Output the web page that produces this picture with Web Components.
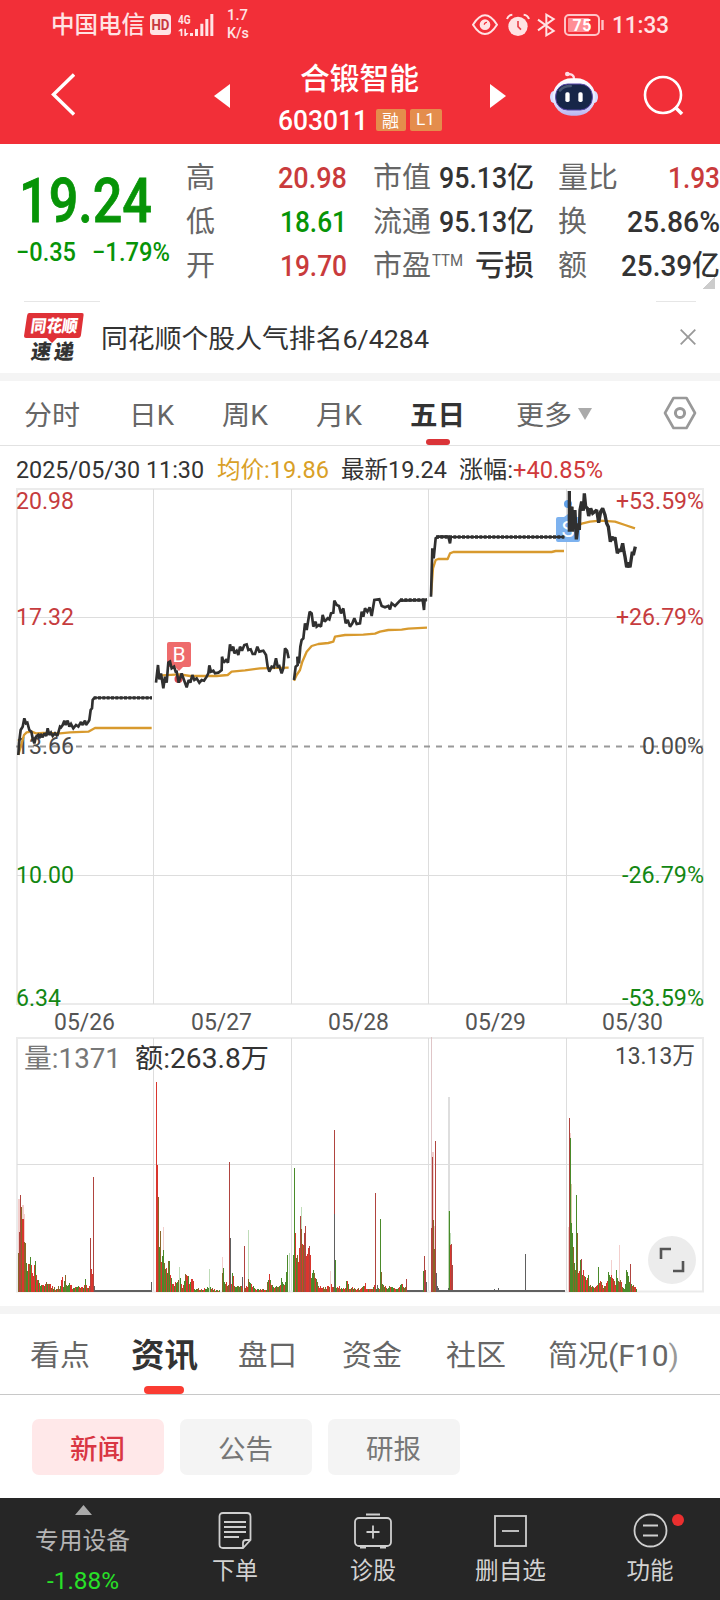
<!DOCTYPE html>
<html lang="zh-CN">
<head>
<meta charset="utf-8">
<title>合锻智能 603011</title>
<style>
html,body{margin:0;padding:0;background:#fff}
body{width:720px;height:1600px;overflow:hidden;font-family:Roboto,"Noto Sans CJK SC",sans-serif;color:#333}
</style>
</head>
<body>
<stock-app></stock-app>
<script>
const define = (name, html, init) => {
  const tpl = document.createElement('template');
  tpl.innerHTML = html;
  customElements.define(name, class extends HTMLElement {
    connectedCallback() {
      if (this.shadowRoot) return;
      this.attachShadow({mode: 'open'}).append(tpl.content.cloneNode(true));
      if (init) init(this, this.shadowRoot);
    }
  });
};

/* One line of text, condensed or widened to the width in "w". */
define('fit-text', `<style>
:host{display:block;flex:none;white-space:nowrap;line-height:1.2}
span{display:inline-block;transform-origin:0 50%}
</style><span><slot></slot></span>`, (el, root) => {
  const w = +el.getAttribute('w'), s = root.querySelector('span');
  const nat = s.getBoundingClientRect().width;
  el.style.width = w + 'px';
  if (nat) s.style.transform = 'scaleX(' + w / nat + ')';
});

define('status-bar', `<style>
:host{display:flex;height:49px;align-items:center;padding-left:51px;color:#ffe3e4;background:#f22f38;box-sizing:border-box}
svg{display:block;flex:none}
.op{font-size:23.5px;font-weight:500;margin-top:1px}
.net{margin-left:13px;font-size:15px;line-height:18px;font-weight:500}
.net fit-text{line-height:18px}
.net fit-text:first-child{margin-top:-2px}
.time{font-size:23px;font-weight:500;margin-top:2px}
</style>
<fit-text class="op" w="94">中国电信</fit-text>
<svg width="21" height="21" viewBox="0 0 21 21" style="margin-left:5px"><rect width="21" height="21" rx="3.5" fill="#ffe3e4"/><text x="10.5" y="15.5" text-anchor="middle" textLength="18" lengthAdjust="spacingAndGlyphs" font-size="14" font-weight="700" fill="#c8373f">HD</text></svg>
<svg width="36" height="24" viewBox="533 36 108 72" style="margin-left:7px" fill="#ffe3e4"><text x="533" y="68" font-size="39" font-weight="700" textLength="38" lengthAdjust="spacingAndGlyphs">4G</text><path d="M541 83h5v22h-5v-14h-8zM552 83h5v13h8l-8 9h-5zM569 96h9v9h-9zM584 84h9v21h-9zM600 68h9v37h-9zM615 54h9v51h-9zM630 39h9v66h-9z"/></svg>
<div class="net"><fit-text w="21">1.7</fit-text><fit-text w="22">K/s</fit-text></div>
<svg width="26" height="22" viewBox="336 40 78 66" style="margin-left:223px" fill="none" stroke="#ffe3e4" stroke-width="6"><path d="M339 72q36-56 72 0q-36 56-72 0z"/><circle cx="375" cy="72" r="13" fill="#ffe3e4"/><path d="M373 72a7 7 0 0 1 8-7" stroke="#f22f38" stroke-width="4"/></svg>
<svg width="24" height="24" viewBox="440 36 72 72" style="margin-left:8px"><circle cx="476" cy="76" r="29" fill="#ffe3e4"/><path d="M476 60v17l9 9" fill="none" stroke="#e8444c" stroke-width="5"/><path d="M443 54q4-12 16-13M509 54q-4-12-16-13" fill="none" stroke="#ffe3e4" stroke-width="6"/></svg>
<svg width="19" height="24" viewBox="533 36 57 72" style="margin-left:7px" fill="none" stroke="#ffe3e4" stroke-width="6"><path d="M536 56l47 34-22 13V41l22 13-47 34"/></svg>
<svg width="41" height="22" viewBox="0 0 41 22" style="margin-left:8px"><rect x="1" y="1" width="34" height="20" rx="4" fill="none" stroke="#ffc4c7" stroke-width="2"/><rect x="4" y="4" width="21" height="14" rx="1" fill="#ff8f95"/><path d="M38.5 6v10" stroke="#ffc4c7" stroke-width="2.4"/><text x="18" y="16.8" text-anchor="middle" font-size="16" font-weight="700" fill="#fff" textLength="19">75</text></svg>
<fit-text class="time" w="57" style="margin-left:7px">11:33</fit-text>`);

define('title-bar', `<style>
:host{display:flex;height:95px;background:#f22f38;color:#fff;box-sizing:border-box;padding-left:51px}
svg{display:block;flex:none}
.mid{width:164px;margin-left:48px;display:flex;flex-direction:column;align-items:center}
.name{font-size:29.5px;font-weight:500;line-height:36px;margin:12px 0 0 -1px}
.code{display:flex;align-items:center;margin:5px 0 0 -1px;height:34px;font-size:27px;font-weight:500}
.code>fit-text{margin-top:4px}
.tag{background:#e48d4c;border-radius:2px;height:22px;display:flex;align-items:center;justify-content:center;font-size:17px;font-weight:400;margin-top:1px}
</style>
<svg width="24" height="44" viewBox="0 0 24 44" style="margin-top:24px"><path d="M23 1.5L2.5 21.5L23 41.5" fill="none" stroke="#fff" stroke-width="3.4"/></svg>
<svg width="16" height="24" viewBox="0 0 16 24" style="margin:35px 0 0 139px"><path d="M16 0v24L0 12z" fill="#fff"/></svg>
<div class="mid"><fit-text class="name" w="119">合锻智能</fit-text>
<div class="code"><fit-text w="90">603011</fit-text><div class="tag" style="width:30px;margin-left:8px">融</div><div class="tag" style="width:32px;margin-left:4px"><fit-text w="19">L1</fit-text></div></div></div>
<svg width="16" height="24" viewBox="0 0 16 24" style="margin:35px 0 0 48px"><path d="M0 0v24L16 12z" fill="#fff"/></svg>
<svg width="50" height="48" viewBox="567 214 150 144" style="margin:22px 0 0 43px"><defs><linearGradient id="h" x2="0" y2="1"><stop offset="0" stop-color="#fff"/><stop offset=".6" stop-color="#e6e8ff"/><stop offset="1" stop-color="#b9b4f0"/></linearGradient></defs><path d="M620 224q23-3 22 14" fill="none" stroke="#ffdce5" stroke-width="7"/><circle cx="622" cy="223" r="7" fill="#ffdce5"/><ellipse cx="581" cy="292" rx="11" ry="18" fill="#d7dcff"/><ellipse cx="703" cy="292" rx="11" ry="18" fill="#d7dcff"/><rect x="578" y="236" width="128" height="112" rx="56" fill="url(#h)"/><rect x="587" y="253" width="110" height="78" rx="36" fill="#172648" stroke="#5947a8" stroke-width="3"/><path d="M600 272q10-13 32-13" stroke="#455572" stroke-width="8" stroke-linecap="round" fill="none"/><rect x="616" y="278" width="13" height="29" rx="5" fill="#fff"/><rect x="655" y="278" width="13" height="29" rx="5" fill="#fff"/></svg>
<svg width="42" height="42" viewBox="0 0 42 42" style="margin:26px 0 0 44px" fill="none" stroke="#fff" stroke-width="2.6"><circle cx="20" cy="20" r="18"/><path d="M32 32l7 7" stroke-width="3.5"/></svg>`);

define('quote-panel', `<style>
:host{display:flex;height:157px;background:#fff;overflow:hidden;position:relative}
.last{width:186px;color:#079407;flex:none}
.price{font-size:61px;font-weight:500;margin:21px 0 0 19px;line-height:72px;-webkit-text-stroke:.8px #079407}
.chg{display:flex;margin:-3px 0 0 16px;gap:16px;font-size:26px;font-weight:500}
.chg fit-text{line-height:36px}
.grid{display:grid;grid-template-columns:161px 26px 161px 24px 162px;grid-template-rows:43.5px 43.5px 44px;padding-top:13px;font-size:29px;line-height:40px}
.cell{display:flex;justify-content:space-between;align-items:center;color:#666;grid-row:var(--r)}
.v{font-weight:500;color:#333}.red{color:#c93b3c}.green{color:#079407}
.cell:nth-child(3n+1){grid-column:1}.cell:nth-child(3n+2){grid-column:3}.cell:nth-child(3n){grid-column:5}
.lab{display:flex}
.ttm{font-size:16px;line-height:24px}
.tri{position:absolute;left:703px;top:133px;width:12px;height:12px;background:linear-gradient(135deg,transparent 50%,#ccc 50%)}
</style>
<div class="last"><fit-text class="price" w="133">19.24</fit-text><div class="chg"><fit-text w="60">−0.35</fit-text><fit-text w="78">−1.79%</fit-text></div></div>
<div class="grid">
<div class="cell" style="--r:1"><fit-text w="29">高</fit-text><fit-text class="v red" w="69">20.98</fit-text></div>
<div class="cell" style="--r:1"><fit-text w="58">市值</fit-text><fit-text class="v" w="95">95.13亿</fit-text></div>
<div class="cell" style="--r:1"><fit-text w="60">量比</fit-text><fit-text class="v red" w="52">1.93</fit-text></div>
<div class="cell" style="--r:2"><fit-text w="29">低</fit-text><fit-text class="v green" w="67">18.61</fit-text></div>
<div class="cell" style="--r:2"><fit-text w="58">流通</fit-text><fit-text class="v" w="95">95.13亿</fit-text></div>
<div class="cell" style="--r:2"><fit-text w="29">换</fit-text><fit-text class="v" w="93">25.86%</fit-text></div>
<div class="cell" style="--r:3"><fit-text w="29">开</fit-text><fit-text class="v red" w="67">19.70</fit-text></div>
<div class="cell" style="--r:3"><div class="lab"><fit-text w="58">市盈</fit-text><fit-text class="ttm" w="31" style="margin-left:1px">TTM</fit-text></div><fit-text class="v" w="59">亏损</fit-text></div>
<div class="cell" style="--r:3"><fit-text w="29">额</fit-text><fit-text class="v" w="99">25.39亿</fit-text></div>
</div><div class="tri"></div>`);

define('news-strip', `<style>
:host{display:flex;flex-direction:column;height:80px;box-sizing:border-box;background:#fff}
.rules{display:flex;justify-content:space-between;padding:0 24px}
.rules i{height:1px;background:#e6e6e6}
.row{display:flex;align-items:center;height:71px}
.msg{font-size:26.5px;color:#333;margin:3px 0 0 17px;line-height:40px}
.band{height:8px;background:#f4f4f4}
svg{display:block}
</style>
<div class="rules"><i style="width:76px"></i><i style="width:40px"></i></div>
<div class="row">
<svg width="61" height="52" viewBox="0 0 61 52" style="margin:-2px 0 0 23px"><path d="M6 2H59q2 0 1.600 2L58 24q-.5 3-3 3H34l-5 5-5-5H3q-2 0-2-2L4 5q.4-3 2-3z" fill="#df3137"/><g font-weight="900" transform="skewX(-8)"><text x="10" y="21" font-size="17" fill="#fff" textLength="47" lengthAdjust="spacingAndGlyphs">同花顺</text><g fill="#333"><text x="14" y="48" font-size="20.500" textLength="20" lengthAdjust="spacingAndGlyphs">速</text><text x="37" y="48" font-size="20.500" textLength="20" lengthAdjust="spacingAndGlyphs">递</text></g></g></svg>
<fit-text class="msg" w="328">同花顺个股人气排名6/4284</fit-text>
<svg width="16" height="16" viewBox="0 0 16 16" style="margin:-1px 0 0 251px"><path d="M.7.7l14.600 14.600M15.300.7L.7 15.300" stroke="#999" stroke-width="1.800"/></svg>
</div><div class="band"></div>`);

/* Tab label with a marker under it while it is active. */
define('tab-item', `<style>
:host{display:flex;flex-direction:column;align-items:center;justify-content:flex-end;height:100%;flex:none;color:#666;position:relative}
:host([active]){color:#333;font-weight:700}
i{display:none;position:absolute;left:calc(50% - var(--mw,24px)/2 + var(--mx,.5px));bottom:0;width:var(--mw,24px);height:var(--mh,6px);border-radius:4px;background:var(--mc,#da3438)}
:host([active]) i{display:block}
</style><slot></slot><i></i>`);

define('chart-tabs', `<style>
:host{display:flex;height:65px;box-sizing:border-box;border-bottom:1px solid #e2e2e2;font-size:27px}
fit-text{line-height:36px;margin-bottom:11px}
svg{display:block;flex:none}
</style>
<tab-item style="margin-left:24px"><fit-text w="56">分时</fit-text></tab-item>
<tab-item style="margin-left:49px"><fit-text w="45">日K</fit-text></tab-item>
<tab-item style="margin-left:48px"><fit-text w="46">周K</fit-text></tab-item>
<tab-item style="margin-left:48px"><fit-text w="46">月K</fit-text></tab-item>
<tab-item active style="margin-left:48px"><fit-text w="55">五日</fit-text></tab-item>
<tab-item style="margin-left:51px"><fit-text w="56">更多</fit-text></tab-item>
<svg width="14" height="12" viewBox="0 0 14 12" style="margin:27px 0 0 6px"><path d="M0 0h14L7 12z" fill="#aaa"/></svg>
<svg width="34" height="34" viewBox="0 0 34 34" style="margin:15px 0 0 71px" fill="none" stroke="#999" stroke-width="2.600" stroke-linejoin="round"><path d="M10.500 2h13L32 17l-8.500 15h-13L2 17z"/><circle cx="17" cy="17" r="4.600" stroke-width="3"/></svg>`);

define('quote-line', `<style>
:host{display:flex;height:42px;align-items:center;padding-left:16px;font-size:23.5px;color:#333;box-sizing:border-box;padding-top:6px}
fit-text{line-height:36px}
</style>
<fit-text w="188">2025/05/30 11:30</fit-text>
<fit-text w="112" style="margin-left:13px;color:#d9a027">均价:19.86</fit-text>
<fit-text w="106" style="margin-left:12px">最新19.24</fit-text>
<fit-text w="54" style="margin-left:12px">涨幅:</fit-text>
<fit-text w="90" style="color:#d03a3c">+40.85%</fit-text>`);

define('price-chart', `<style>
:host{display:block;height:517px}
svg{display:block;overflow:visible}
.grid{stroke:#ddd;stroke-width:1;fill:none}
.edge{stroke:#ebebeb;stroke-width:2;fill:none}
.p{fill:none;stroke:#303030;stroke-width:8;stroke-linejoin:miter;stroke-miterlimit:2}
.a{fill:none;stroke:#d89a2e;stroke-width:7;stroke-linejoin:round}
.t{font-size:24px}.r{fill:#c63c3e}.g{fill:#138713}.k{fill:#4a4a4a}
</style>
<svg width="720" height="517" viewBox="0 488 720 517">
<path class="edge" d="M17 489H703V1004H17z"/>
<path class="grid" d="M17 617.500H703M17 875.500H703M153.500 489V1004M291.500 489V1004M428.500 489V1004M566.500 489V1004"/>
<path d="M16 746.500H703" stroke="#999" stroke-width="1.800" stroke-dasharray="6 6"/>
<g class="t"><g class="r"><text x="16" y="509" textLength="58" lengthAdjust="spacingAndGlyphs">20.98</text><text x="16" y="625" textLength="58" lengthAdjust="spacingAndGlyphs">17.32</text><text x="616" y="509" textLength="88" lengthAdjust="spacingAndGlyphs">+53.59%</text><text x="616" y="625" textLength="88" lengthAdjust="spacingAndGlyphs">+26.79%</text></g>
<g class="k"><text x="16" y="754" textLength="58" lengthAdjust="spacingAndGlyphs">13.66</text><text x="642" y="754" textLength="62" lengthAdjust="spacingAndGlyphs">0.00%</text></g>
<g class="g"><text x="16" y="883" textLength="58" lengthAdjust="spacingAndGlyphs">10.00</text><text x="16" y="1006" textLength="45" lengthAdjust="spacingAndGlyphs">6.34</text><text x="622" y="883" textLength="82" lengthAdjust="spacingAndGlyphs">-26.79%</text><text x="622" y="1006" textLength="82" lengthAdjust="spacingAndGlyphs">-53.59%</text></g></g>
<path d="M169 642h20q2 0 2 2v21q0 2-2 2h-6l-4 4-4-4h-6q-2 0-2-2v-21q0-2 2-2z" fill="#ee6b6c"/><circle cx="178.500" cy="679" r="4" fill="#d94a4c"/><text x="179" y="662" text-anchor="middle" font-size="21" fill="#fff">B</text>
<path d="M558 517h6l4-3 4 3h6q2 0 2 2v21q0 2-2 2h-20q-2 0-2-2v-21q0-2 2-2z" fill="#7db2ef"/><circle cx="568" cy="504" r="4" fill="#5fa0e8"/><text x="568" y="537" text-anchor="middle" font-size="22" fill="#fff">S</text>
<g transform="translate(0 480) scale(.33333333)">
<polyline class="a" points="55,825 65,790 72,765 80,757 95,755 108,760 130,759 180,760 210,757 265,755 285,744 455,744"/>
<polyline class="p" points="55,825 57,790 62,750 68,740 73,715 78,730 82,728 88,750 94,755 98,775 103,790 108,770 114,765 118,775 122,762 128,772 133,760 139,768 143,745 148,765 153,758 158,768 165,760 172,768 180,740 183,742 188,735 193,722 197,735 203,722 208,740 213,732 220,745 228,735 235,740 243,726 247,735 255,722 258,735 265,725 268,720 272,690 276,685 278,660 283,653"/>
<path d="M281 653.500H456M1308 171H1693" stroke="#303030" stroke-width="6"/>
<path d="M281 653.500H456M1308 171H1693M1200 360H1280" stroke="#303030" stroke-width="10" stroke-dasharray="9 4"/>
<polyline class="a" points="480,590 485,586 540,583 570,588 650,588 683,585 695,575 735,571 780,565 866,563"/>
<polyline class="p" points="468,608 474,555 478,598 483,580 490,625 495,590 500,608 505,548 510,545 515,565 522,560 527,575 530,575 536,608 545,580 552,600 560,622 566,600 571,608 577,585 583,600 590,595 598,608 605,600 612,602 620,590 625,580 628,556 633,575 640,572 645,580 655,578 665,570 666,530 671,548 678,540 684,548 690,493 694,512 700,500 703,520 710,512 715,525 720,500 726,512 733,495 740,493 745,510 752,508 758,522 765,522 772,500 778,515 790,512 798,525 803,560 808,575 815,560 822,562 828,535 833,560 838,558 845,580 850,565 855,505 861,512 866,535"/>
<g transform="translate(855 0)">
<polyline class="a" points="27,602 35,585 45,570 52,545 65,515 80,498 100,492 130,489 145,485 150,470 180,465 235,464 270,461 285,455 310,450 350,449 370,446 426,443"/>
<polyline class="p" points="27,600 32,560 38,555 37,530 42,550 46,500 50,480 55,475 60,430 65,450 74,395 80,400 85,440 92,425 95,440 102,435 108,440 113,405 119,425 128,415 133,418 138,400 145,398 148,362 155,375 162,378 168,400 175,385 182,430 188,420 195,440 202,430 208,415 215,432 225,430 230,395 235,410 240,385 247,395 254,382 260,408 268,360 283,358 290,378 300,382 310,378 315,388 320,370 330,378 345,362 413,360 417,390 419,360 426,358"/>
<polyline class="a" points="438,345 444,265 452,240 460,237 488,237 495,220 505,216 800,216 812,213 837,213"/>
<polyline class="p" points="438,350 442,205 446,235 452,175 460,170 490,170 495,190 498,170"/></g>
<g transform="translate(1500 0)">
<polyline class="a" points="222,142 245,131 270,125 300,122 345,125 375,135 405,145"/>
<polyline class="p" style="stroke-width:10" points="208,33 208,155 212,90 216,80 217,155 220,95 225,95 229,178 235,130 238,150 240,90 245,65 250,92 253,40 257,80 262,85 266,108 272,85 278,100 284,95 290,90 296,128 302,95 308,85 315,105 320,130 325,140 331,185 336,170 340,180 345,172 352,220 358,208 362,215 368,190 372,215 375,230 380,262 385,248 390,262 397,215 400,225 406,200"/></g>
</g></svg>`);

define('date-axis', `<style>
:host{display:grid;grid-template-columns:repeat(5,137.100px);padding-left:16px;height:32px;justify-items:center;align-items:center;font-size:24px;color:#555}
fit-text{line-height:32px;margin-top:1px}
</style><fit-text w="61">05/26</fit-text><fit-text w="61">05/27</fit-text><fit-text w="61">05/28</fit-text><fit-text w="61">05/29</fit-text><fit-text w="61">05/30</fit-text>`);

define('volume-chart', `<style>
:host{display:block;height:269px}
svg{display:block}
</style>
<svg width="720" height="256" viewBox="0 1037 720 256">
<path d="M17 1038H703V1291.500H17z" fill="none" stroke="#ebebeb" stroke-width="2"/>
<path d="M17 1164.500H703M153.500 1038V1291M291.500 1038V1291M428.500 1038V1291M566.500 1038V1291" stroke="#ddd" stroke-width="1"/>
<g id="bars" transform="translate(0 980) scale(.333333333333)" shape-rendering="crispEdges"></g>
<text x="24" y="1068" font-size="27" fill="#777" textLength="97" lengthAdjust="spacingAndGlyphs">量:1371</text>
<text x="135" y="1068" font-size="27" fill="#333" textLength="134" lengthAdjust="spacingAndGlyphs">额:263.8万</text>
<text x="615" y="1064" font-size="23.500" fill="#4a4a4a" textLength="80" lengthAdjust="spacingAndGlyphs">13.13万</text>
<circle cx="672" cy="1260" r="24" fill="#ececec"/>
<path d="M661 1259v-10h10M683 1261v10h-10" fill="none" stroke="#555" stroke-width="2.600"/>
</svg>`, (el, root) => {
  const R = '#d9362e', D = '#b0443f', G = '#4a8a2a', O = '#8a6528', K = '#606060', P = '#f3cfcd', L = '#bfdcb8';
  const base = 936;
  let out = '';
  const bar = (x, y, c, w = 3) => { x = Math.round(x / 3) * 3; out += `<rect x="${x}" y="${y}" width="${w}" height="${base - y}" fill="${c}"/>`; };
  let seed = 11;
  const rnd = () => (seed = (seed * 16807) % 2147483647) / 2147483647;
  /* Minute bars under an envelope given as x,y pairs. */
  const fill = (pts, cols, amp = .55) => {
    for (let i = 0; i + 3 < pts.length; i += 2)
      for (let x = pts[i]; x < pts[i + 2]; x += 3) {
        const t = (x - pts[i]) / (pts[i + 2] - pts[i]);
        const h = base - (pts[i + 1] + t * (pts[i + 3] - pts[i + 1]));
        bar(x, Math.round(base - Math.max(4, h * (1 - amp * rnd()))), cols[Math.floor(rnd() * cols.length)]);
      }
  };
  const mix = [R, R, G, O, G];
  bar(54, 657, P, 6); bar(66, 675, P, 6); bar(71, 702, P, 4);
  [[54,820,O],[57,755,D],[60,646,D],[63,682,O],[66,718,R],[69,718,R],[72,787,O],[75,790,O],[78,850,G],[81,873,G],[84,852,R],[87,852,O],[90,832,G],[93,855,R],[96,878,R],[99,888,R],[102,855,R],[105,843,G],[108,884,R],[111,900,R]].forEach(b => bar(...b));
  fill([114,900, 130,912, 142,900, 155,918, 168,922, 176,915], mix);
  fill([176,920, 185,878, 188,910, 194,885, 199,910, 206,902, 215,922, 235,916, 250,915, 256,895, 262,920, 272,912], mix, .4);
  [[270,774,D],[273,866,R],[276,882,R],[279,592,D],[282,918,K]].forEach(b => bar(...b));
  const flat = (a, b) => { out += `<path d="M${a} 933H${b}" stroke="${K}" stroke-width="4"/><path d="M${a} 930H${b}" stroke="${K}" stroke-width="3" stroke-dasharray="5 13" opacity=".6"/>`; };
  flat(285, 456); bar(453, 906, K);
  bar(489, 742, P);
  [[468,307,R],[471,555,R],[474,651,O],[477,800,G],[480,753,O],[483,845,R],[486,828,G],[489,811,G],[492,850,O],[495,868,G],[498,864,R],[501,880,G],[504,843,O],[507,843,G],[510,885,R],[513,895,G]].forEach(b => bar(...b));
  fill([516,890, 527,910, 541,870, 545,920, 556,870, 561,855, 566,905, 577,870, 583,925, 615,922, 630,915, 645,928, 660,928], mix);
  bar(538, 860, L); bar(628, 866, L);
  bar(666, 832, P); bar(744, 750, L);
  [[666,880,O],[669,864,G],[672,905,G],[687,546,D],[690,774,K],[696,880,G],[726,892,K],[732,797,D],[744,898,O]].forEach(b => bar(...b));
  fill([675,900, 687,918], mix, .4);
  fill([693,900, 699,885, 702,912, 729,918], mix, .4);
  fill([735,918, 744,918], mix, .4);
  fill([747,900, 753,908, 765,925, 798,928, 806,865, 810,900, 820,920, 838,915, 843,893, 850,910, 858,900], mix, .4);
  bar(858, 877, G); bar(861, 825, G); bar(867, 819, L);
  bar(882, 648, P); bar(902, 680, L);
  [[879,825,G],[882,565,G],[885,760,R],[888,835,G],[891,825,O],[894,845,R],[897,805,R],[900,709,D],[903,748,O],[906,792,R],[909,796,O],[912,760,D],[915,738,D],[918,828,R],[921,822,R],[924,803,R],[927,797,D],[930,825,R],[933,895,G],[936,880,G],[939,870,G],[942,880,O]].forEach(b => bar(...b));
  fill([945,888, 955,915, 965,918, 985,918, 992,900, 1000,915], mix, .5);
  fill([1008,915, 1035,922, 1037,885, 1045,918, 1080,925], mix, .5);
  bar(990, 874, P);
  bar(1002, 450, D); bar(1002, 702, K); bar(1005, 840, G);
  const g = 1080;
  fill([g,925, g+15,905, g+18,925, g+38,922, g+41,903, g+45,922, g+60,920, g+68,910, g+80,925, g+88,912, g+95,920, g+110,926, g+122,908, g+130,920, g+137,918], mix, .4);
  [[45,640,D],[51,915,K],[60,716,G],[63,877,O],[138,898,D]].forEach(b => bar(g + b[0], b[1], b[2]));
  flat(g+140, g+198);
  [[189,872,G],[192,829,D],[195,871,D],[198,906,K]].forEach(b => bar(g + b[0], b[1], b[2]));
  out += `<rect x="${g+213}" y="171" width="3" height="765" fill="#dfc5c7"/>`;
  bar(g+217, 515, P, 6); bar(g+222, 737, P, 4);
  [[213,745,D],[216,532,D],[219,720,O],[222,808,O],[225,484,D],[228,880,K],[231,918,K],[234,925,K]].forEach(b => bar(g + b[0], b[1], b[2]));
  bar(g+264, 351, '#dedede', 6); bar(g+264, 692, L, 3); bar(g+270, 758, L, 3);
  [[264,925,K],[267,692,G],[270,795,R],[273,792,D],[276,855,D],[402,926,K],[414,924,K],[495,822,K]].forEach(b => bar(g + b[0], b[1], b[2]));
  flat(g+234, g+615);
  bar(g+624, 740, P); bar(g+630, 460, P); bar(g+633, 612, '#dccaa8');
  [[627,414,D],[630,474,G],[633,730,G],[636,760,G],[639,800,O],[642,850,G],[645,870,O],[648,644,G],[651,760,O],[654,878,R],[657,872,R],[660,840,G],[663,838,D],[666,885,G],[669,870,R],[672,888,R],[675,892,G],[678,900,R],[681,895,R],[684,885,G]].forEach(b => bar(g + b[0], b[1], b[2]));
  fill([g+687,910, g+700,920, g+712,912, g+720,895, g+730,922, g+742,900, g+748,878, g+757,875, g+765,905, g+772,880, g+780,898, g+792,925, g+800,870, g+808,905, g+825,915, g+829,928], mix, .35);
  bar(g+753, 840, P); bar(g+778, 795, P);
  [[714,862,G],[744,876,G],[753,885,R],[768,871,G],[777,905,D],[798,870,G],[810,852,D]].forEach(b => bar(g + b[0], b[1], b[2]));
  root.querySelector('#bars').innerHTML = out;
});

define('section-tabs', `<style>
:host{display:flex;height:89px;box-sizing:border-box;border-top:8px solid #f4f4f4;border-bottom:1px solid #c8c8c8;font-size:29px}
fit-text{line-height:40px;margin-bottom:18px}
.on{font-size:33px}
</style>
<tab-item style="margin-left:30px"><fit-text w="60">看点</fit-text></tab-item>
<tab-item active style="margin-left:41px;--mw:40px;--mh:8px;--mc:#fa3c32;--mx:-.5px"><fit-text class="on" w="67">资讯</fit-text></tab-item>
<tab-item style="margin-left:40px"><fit-text w="59">盘口</fit-text></tab-item>
<tab-item style="margin-left:45px"><fit-text w="60">资金</fit-text></tab-item>
<tab-item style="margin-left:44px"><fit-text w="60">社区</fit-text></tab-item>
<tab-item style="margin-left:42px"><fit-text w="131">简况(F10<span style="color:#999">)</span></fit-text></tab-item>`);

define('filter-chip', `<style>
:host{display:flex;width:132px;height:56px;border-radius:7px;background:#f4f4f4;color:#777;font-size:27px;align-items:center;justify-content:center}
:host([active]){background:#ffe8e9;color:#d93643;font-weight:500}
fit-text{line-height:36px;margin:5px 2px 0 0}
</style><fit-text w="55"><slot></slot></fit-text>`);

define('filter-row', `<style>
:host{display:flex;gap:16px;padding:24px 32px 0;height:103px;box-sizing:border-box}
</style><filter-chip active>新闻</filter-chip><filter-chip>公告</filter-chip><filter-chip>研报</filter-chip>`);

define('nav-item', `<style>
:host{display:flex;flex-direction:column;align-items:center;width:138px;flex:none;position:relative;font-size:23.500px;color:#d2d2d2}
.ic{height:37px;margin-top:14px;display:flex;align-items:center}
.tx{margin-top:8px;line-height:34px}
</style><div class="ic"><slot name="icon"></slot></div><div class="tx"><slot></slot></div>`);

define('bottom-nav', `<style>
:host{display:flex;height:102px;background:#262626;overflow:hidden}
svg{display:block;fill:none;stroke:#cfcfcf;stroke-width:1.800}
.sec{width:166px;display:flex;flex-direction:column;align-items:center;color:#b5b5b5;font-size:23.500px;flex:none}
.dot{position:absolute;left:91px;top:16px;width:12px;height:12px;border-radius:50%;background:#ea2f2f}
</style>
<div class="sec"><svg width="17" height="10" style="margin-top:7px" viewBox="0 0 17 10"><path d="M0 10L8.500 0L17 10z" fill="#aaa" stroke="none"/></svg>
<fit-text w="95" style="line-height:34px;margin:9px 1px 0 0">专用设备</fit-text>
<fit-text w="72" style="line-height:30px;margin:8px 1px 0 0;color:#28e128">-1.88%</fit-text></div>
<nav-item><svg slot="icon" width="34" height="37" viewBox="0 0 34 37"><path d="M5 1h24q3.500 0 3.500 3.500V28L25 36H5q-3.500 0-3.500-3.500v-28Q1.500 1 5 1zM25 36v-5q0-3 3-3h4.500M6 10h22M6 15h22M6 20h22M6 25h15"/></svg><fit-text w="46">下单</fit-text></nav-item>
<nav-item><svg slot="icon" width="38" height="37" viewBox="0 0 38 37"><rect x="1" y="6" width="36" height="28" rx="4"/><path d="M12 2.500h14M12.500 20h13M19 13.500v13M6 35.500h6M26 35.500h6"/></svg><fit-text w="46">诊股</fit-text></nav-item>
<nav-item style="margin-left:-1px"><svg slot="icon" width="33" height="34" viewBox="0 0 33 34"><rect x="1" y="2" width="31" height="30"/><path d="M8 17h17"/></svg><fit-text w="71">删自选</fit-text></nav-item>
<nav-item style="margin-left:2px"><svg slot="icon" width="35" height="35" viewBox="0 0 35 35"><circle cx="17.500" cy="17.500" r="16"/><path d="M10 12.500h15M10 22.500h15"/></svg><fit-text w="47">功能</fit-text><div class="dot" slot="icon"></div></nav-item>`);

define('stock-app', `<style>
:host{display:flex;flex-direction:column;width:720px;height:1600px;overflow:hidden;background:#fff}
:host>*{flex:none}
</style>
<status-bar></status-bar><title-bar></title-bar><quote-panel></quote-panel><news-strip></news-strip>
<chart-tabs></chart-tabs><quote-line></quote-line><price-chart></price-chart><date-axis></date-axis><volume-chart></volume-chart>
<section-tabs></section-tabs><filter-row></filter-row><bottom-nav></bottom-nav>`);
</script>
</body>
</html>
